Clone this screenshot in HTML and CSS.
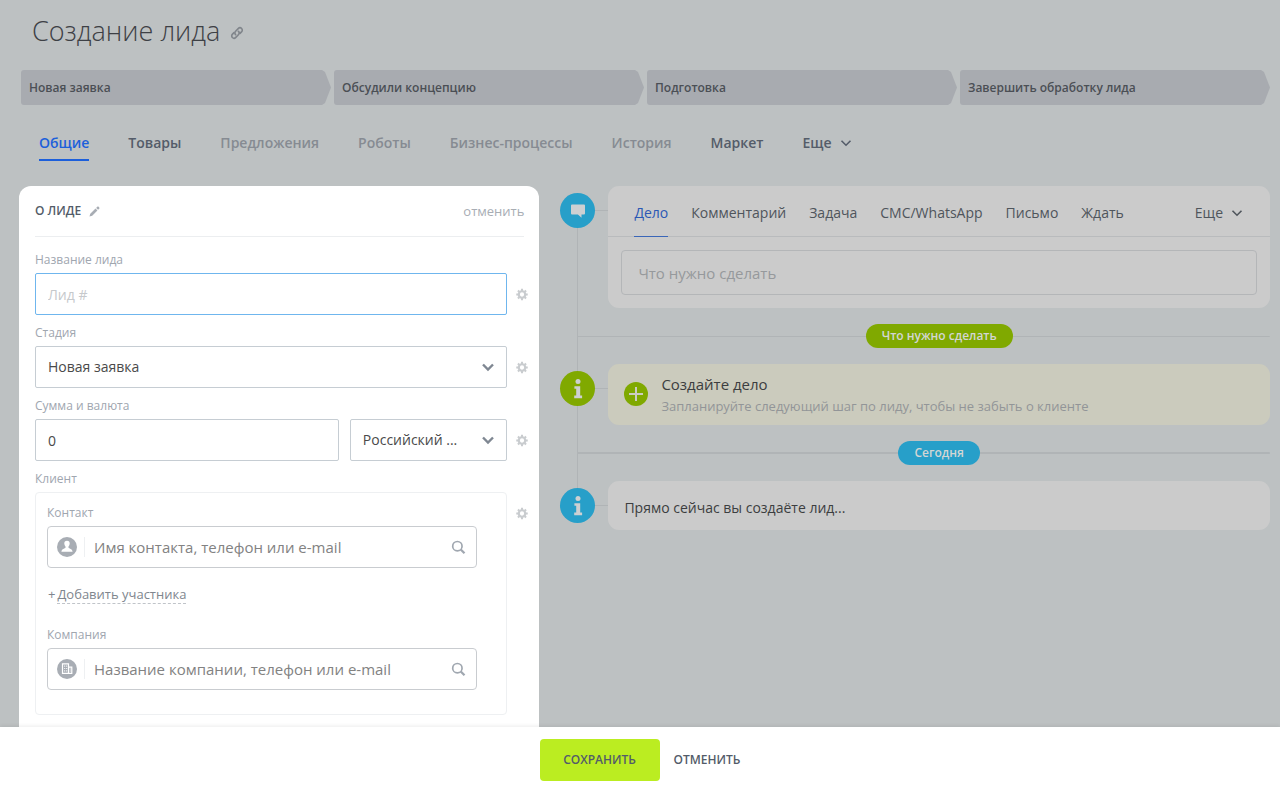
FILE: index.html
```html
<!DOCTYPE html>
<html lang="ru">
<head>
<meta charset="utf-8">
<meta name="viewport" content="width=device-width, initial-scale=1">
<title>Создание лида</title>
<link rel="stylesheet" href="styles.css">
</head>
<body>
<svg class="sprite" aria-hidden="true">
  <symbol id="gear" viewBox="0 0 14 14">
    <circle cx="7" cy="7" r="3.8" fill="none" stroke="currentColor" stroke-width="2.600"/>
    <path d="M7 .3v2.500M7 11.200v2.500M.3 7h2.500M11.200 7h2.500M2.300 2.300l1.700 1.700M10 10l1.700 1.700M11.700 2.300l-1.700 1.700M4 10l-1.700 1.700" stroke="currentColor" stroke-width="2.400"/>
  </symbol>
  <symbol id="chevron" viewBox="0 0 14 14">
    <path d="M2 4.5l5 5 5-5" fill="none" stroke="currentColor" stroke-width="2.4"/>
  </symbol>
  <symbol id="chevron-thin" viewBox="0 0 14 14">
    <path d="M2.500 4.700l4.500 4.500 4.500-4.500" fill="none" stroke="currentColor" stroke-width="1.600"/>
  </symbol>
  <symbol id="search" viewBox="0 0 16 16">
    <circle cx="6.8" cy="6.6" r="5" fill="none" stroke="currentColor" stroke-width="1.8"/>
    <path d="M10.4 10.2l4 4" stroke="currentColor" stroke-width="2.4"/>
  </symbol>
  <symbol id="info" viewBox="0 0 16 22">
    <circle cx="8" cy="3.6" r="2.5" fill="currentColor"/>
    <path d="M4.4 8.2h5.8v9.4h1.9v2.6H4.2v-2.6h2v-6.8H4.4z" fill="currentColor"/>
  </symbol>
</svg>

<main class="page">
  <header class="title-bar">
    <h1 class="title">Создание лида</h1>
    <button class="icon-button" type="button" aria-label="Скопировать ссылку">
      <svg class="link-icon" viewBox="0 0 14 14" fill="none" stroke="currentColor" stroke-width="1.600" stroke-linecap="round">
        <path d="M5.6 8.6c-1-1-.9-2.4 0-3.300l2.600-2.700c1-1 2.500-1 3.400-.1s.9 2.400-.1 3.400l-1.500 1.500"/>
        <path d="M8.400 5.400c1 1 .9 2.400 0 3.300l-2.600 2.700c-1 1-2.500 1-3.400.1s-.9-2.400.1-3.400l1.500-1.500"/>
      </svg>
    </button>
  </header>

  <ol class="stages">
    <li class="stage">Новая заявка</li>
    <li class="stage">Обсудили концепцию</li>
    <li class="stage">Подготовка</li>
    <li class="stage">Завершить обработку лида</li>
  </ol>

  <nav class="tabs">
    <a class="tab tab-active" href="#">Общие</a>
    <a class="tab" href="#">Товары</a>
    <a class="tab tab-disabled" href="#">Предложения</a>
    <a class="tab tab-disabled" href="#">Роботы</a>
    <a class="tab tab-disabled" href="#">Бизнес-процессы</a>
    <a class="tab tab-disabled" href="#">История</a>
    <a class="tab" href="#">Маркет</a>
    <button class="tab more" type="button">Еще <svg class="chevron"><use href="#chevron-thin"/></svg></button>
  </nav>

  <div class="columns">
    <section class="editor">
      <header class="editor-head">
        <h2 class="editor-title">О лиде</h2>
        <button class="icon-button" type="button" aria-label="Переименовать">
          <svg class="pencil" viewBox="0 0 12 12"><path d="M0.500 11.500l.9-3 5.700-5.700 2.100 2.100-5.700 5.700zM7.800 2.100l1.200-1.200c.5-.5 1.100-.5 1.500-.1l.7.7c.4.400.4 1-.1 1.500l-1.200 1.200z" fill="currentColor"/></svg>
        </button>
        <button class="editor-cancel" type="button">отменить</button>
      </header>

      <form class="fields">
        <label class="label" for="lead-name">Название лида</label>
        <div class="field">
          <input class="control control-focus" id="lead-name" type="text" placeholder="Лид #">
          <button class="icon-button gear" type="button" aria-label="Настройки поля"><svg><use href="#gear"/></svg></button>
        </div>

        <label class="label" for="lead-stage">Стадия</label>
        <div class="field">
          <div class="select">
            <select class="control" id="lead-stage"><option>Новая заявка</option></select>
            <svg class="select-arrow"><use href="#chevron"/></svg>
          </div>
          <button class="icon-button gear" type="button" aria-label="Настройки поля"><svg><use href="#gear"/></svg></button>
        </div>

        <label class="label" for="lead-sum">Сумма и валюта</label>
        <div class="field">
          <div class="money">
            <input class="control" id="lead-sum" type="text" value="0">
            <div class="select">
              <select class="control" aria-label="Валюта"><option>Российский ...</option></select>
              <svg class="select-arrow"><use href="#chevron"/></svg>
            </div>
          </div>
          <button class="icon-button gear" type="button" aria-label="Настройки поля"><svg><use href="#gear"/></svg></button>
        </div>

        <div class="label">Клиент</div>
        <div class="field">
          <div class="client">
            <label class="label" for="contact">Контакт</label>
            <div class="lookup">
              <svg class="lookup-icon" viewBox="0 0 20 20">
                <circle cx="10" cy="10" r="10" fill="#a8adb4"/>
                <path d="M10 3.800c-1.900 0-2.800 1.300-2.700 3 .1 1.200.5 2.100 1.200 2.700v1.300c-.3.700-3.900 1.100-4.100 3.900h11.200c-.2-2.800-3.800-3.200-4.100-3.900V9.500c.7-.6 1.100-1.500 1.200-2.700.1-1.700-.8-3-2.700-3z" fill="#fff"/>
              </svg>
              <input class="lookup-input" id="contact" type="text" placeholder="Имя контакта, телефон или e-mail">
              <button class="icon-button" type="button" aria-label="Найти контакт"><svg class="search"><use href="#search"/></svg></button>
            </div>
            <button class="add" type="button"><span class="add-sign">+</span><span class="add-text">Добавить участника</span></button>
            <label class="label" for="company">Компания</label>
            <div class="lookup">
              <svg class="lookup-icon" viewBox="0 0 20 20">
                <circle cx="10" cy="10" r="10" fill="#a8adb4"/>
                <path d="M5.500 4.800h6v9.500h-6zM11.500 8.200h3.300v6.100h-3.300" fill="none" stroke="#fff" stroke-width="1.200"/>
                <path d="M7.200 7.200h1M9.200 7.200h1M7.200 9.500h1M9.200 9.500h1M7.200 11.800h1M9.200 11.800h1M12.700 10h1M12.700 12h1" stroke="#fff" stroke-width="1.200"/>
              </svg>
              <input class="lookup-input" id="company" type="text" placeholder="Название компании, телефон или e-mail">
              <button class="icon-button" type="button" aria-label="Найти компанию"><svg class="search"><use href="#search"/></svg></button>
            </div>
          </div>
          <button class="icon-button gear" type="button" aria-label="Настройки поля"><svg><use href="#gear"/></svg></button>
        </div>
      </form>
    </section>

    <section class="timeline">
      <div class="entry">
        <span class="badge badge-blue">
          <svg class="bubble" viewBox="0 0 16 16"><path d="M2 1.500h12q1 0 1 1v8q0 1-1 1h-2.500v3.300l-3.600-3.300H2q-1 0-1-1v-8q0-1 1-1z" fill="currentColor"/></svg>
        </span>
        <div class="card">
          <nav class="actions">
            <a class="action action-active" href="#">Дело</a>
            <a class="action" href="#">Комментарий</a>
            <a class="action" href="#">Задача</a>
            <a class="action" href="#">СМС/WhatsApp</a>
            <a class="action" href="#">Письмо</a>
            <a class="action" href="#">Ждать</a>
            <button class="action action-more" type="button">Еще <svg class="chevron"><use href="#chevron-thin"/></svg></button>
          </nav>
          <div class="composer">
            <input class="todo" type="text" placeholder="Что нужно сделать" aria-label="Что нужно сделать">
          </div>
        </div>
      </div>

      <div class="divider"><span class="pill pill-green">Что нужно сделать</span></div>

      <div class="entry">
        <span class="badge badge-green"><svg class="info"><use href="#info"/></svg></span>
        <div class="card notice">
          <button class="icon-button plus" type="button" aria-label="Создать дело">
            <svg viewBox="0 0 24 24"><circle cx="12" cy="12" r="12" fill="#80a900"/><path d="M12 5v14M5 12h14" stroke="#cccdc2" stroke-width="2"/></svg>
          </button>
          <div>
            <div class="notice-title">Создайте дело</div>
            <div class="notice-text">Запланируйте следующий шаг по лиду, чтобы не забыть о клиенте</div>
          </div>
        </div>
      </div>

      <div class="divider divider-bold"><span class="pill pill-blue">Сегодня</span></div>

      <div class="entry">
        <span class="badge badge-blue"><svg class="info"><use href="#info"/></svg></span>
        <div class="card message">Прямо сейчас вы создаёте лид...</div>
      </div>
    </section>
  </div>
</main>

<footer class="footer">
  <button class="save" type="button">Сохранить</button>
  <button class="cancel" type="button">Отменить</button>
</footer>
</body>
</html>
```
FILE: styles.css
```css
* {
  box-sizing: border-box;
}

body {
  display: flex;
  flex-direction: column;
  height: 100vh;
  margin: 0;
  background: #bdc1c2;
  color: #4a4e54;
  font-family: "Open Sans", "Noto Sans", sans-serif;
  font-size: 15px;
  line-height: 20px;
}

button,
input,
select {
  margin: 0;
  padding: 0;
  border: 0;
  background: none;
  color: inherit;
  font: inherit;
}

a {
  color: inherit;
  text-decoration: none;
}

svg {
  display: block;
}

.sprite {
  position: absolute;
  width: 0;
  height: 0;
}

.icon-button {
  display: flex;
  flex: none;
}

.page {
  display: flex;
  flex: 1;
  flex-direction: column;
  min-height: 0;
  overflow: hidden;
}

/* Title */
.title-bar {
  display: flex;
  flex: none;
  align-items: center;
  gap: 10px;
  padding: 11px 32px 19px;
}

.title {
  margin: 0;
  color: #3d4045;
  font-size: 27px;
  font-weight: 300;
  line-height: 40px;
}

.title-bar .icon-button {
  padding-top: 4px;
  color: #80858b;
}

.link-icon {
  width: 14px;
  height: 14px;
}

/* Stages */
.stages {
  display: flex;
  flex: none;
  gap: 3px;
  margin: 0;
  padding: 0 10px 0 21px;
  list-style: none;
}

.stage {
  flex: 1;
  padding: 8px 8px 7px;
  border-radius: 3px 0 0 3px;
  background: #a8abb0;
  clip-path: polygon(0 0, calc(100% - 9px) 0, calc(100% - 6px) 2px, 100% 50%, calc(100% - 6px) calc(100% - 2px), calc(100% - 9px) 100%, 0 100%);
  color: #4b4f55;
  font-size: 12px;
  font-weight: 600;
}

/* Tabs */
.tabs {
  display: flex;
  flex: none;
  gap: 39px;
  padding: 28px 39px 25px;
}

.tab {
  padding-bottom: 6px;
  border-bottom: 2px solid transparent;
  color: #545c69;
  font-size: 14px;
  font-weight: 600;
}

.tab-active {
  border-color: #1c5fdb;
  color: #1c5fdb;
}

.tab-disabled {
  color: #868b92;
}

.more,
.action-more {
  display: flex;
  align-items: center;
  gap: 7px;
}

.chevron {
  width: 14px;
  height: 14px;
}

/* Columns */
.columns {
  display: grid;
  grid-template-columns: 11fr 15fr;
  flex: 1;
  gap: 21px;
  min-height: 0;
  padding: 0 10px 0 19px;
}

/* Editor */
.editor {
  padding: 0 11px 0 16px;
  border-radius: 12px 12px 0 0;
  background: #fff;
}

.editor-head {
  display: flex;
  align-items: center;
  gap: 8px;
  height: 51px;
  margin-right: 4px;
  border-bottom: 1px solid #eceef0;
}

.editor-title {
  margin: 0;
  color: #535c69;
  font-size: 12px;
  font-weight: 600;
  text-transform: uppercase;
}

.pencil {
  width: 11px;
  height: 11px;
  color: #a8adb4;
}

.editor-cancel {
  margin-left: auto;
  color: #a8adb4;
  font-size: 13px;
}

.fields {
  padding-top: 5px;
}

.label {
  display: block;
  padding: 8px 0 3px;
  color: #a0a6af;
  font-size: 12px;
}

.field {
  display: grid;
  grid-template-columns: 1fr 12px;
  align-items: start;
  gap: 9px;
}

.control {
  width: 100%;
  height: 42px;
  padding: 0 12px;
  border: 1px solid #c6cdd3;
  border-radius: 2px;
  background: #fff;
  color: #4a4a4a;
  font-size: 14px;
}

.control-focus {
  border-color: #6fb6ee;
}

.control::placeholder {
  color: #c6c9cc;
}

.select {
  display: grid;
}

.select .control,
.select-arrow {
  grid-area: 1 / 1;
}

.select .control {
  appearance: none;
}

.select-arrow {
  align-self: center;
  justify-self: end;
  width: 14px;
  height: 14px;
  margin-right: 12px;
  color: #7f8792;
  pointer-events: none;
}

.money {
  display: grid;
  grid-template-columns: 27fr 14fr;
  gap: 11px;
}

.gear {
  padding-top: 15px;
  color: #c9cccf;
}

.gear svg {
  width: 13px;
  height: 13px;
}

.client {
  padding: 2px 29px 24px 11px;
  border: 1px solid #eef0f2;
  border-radius: 4px;
}

.lookup {
  display: flex;
  align-items: center;
  height: 42px;
  padding: 0 10px 0 9px;
  border: 1px solid #c9ccd0;
  border-radius: 4px;
}

.lookup-icon {
  flex: none;
  width: 20px;
  height: 20px;
}

.lookup-input {
  flex: 1;
  min-width: 0;
  margin-left: 7px;
  padding-left: 9px;
  border-left: 1px solid #eef0f2;
  font-size: 15px;
}

.lookup-input::placeholder {
  color: #828282;
}

.search {
  width: 15px;
  height: 15px;
  color: #a0a7b0;
}

.add {
  display: flex;
  gap: 2px;
  margin: 17px 0 13px;
  padding-left: 1px;
  color: #80868e;
  font-size: 13px;
  line-height: 18px;
}

.add-text {
  border-bottom: 1px dashed #c0c4c9;
}

/* Timeline */
.timeline {
  display: flex;
  position: relative;
  flex-direction: column;
  align-self: start;
  gap: 16px;
}

.timeline::before {
  position: absolute;
  top: 24px;
  bottom: 24px;
  left: 17px;
  width: 1px;
  background: #b0b4b6;
  content: "";
}

.entry {
  display: grid;
  position: relative;
  grid-template-columns: 35px 1fr;
  align-items: start;
  gap: 13px;
  background: linear-gradient(#b0b4b6, #b0b4b6) 35px 24px / 13px 1px no-repeat;
}

.badge {
  display: grid;
  place-items: center;
  height: 35px;
  margin-top: 7px;
  border-radius: 50%;
  color: #cdd0d2;
}

.badge-blue,
.pill-blue {
  background: #279fc9;
}

.badge-green,
.pill-green {
  background: #80a900;
}

.bubble {
  width: 16px;
  height: 16px;
}

.info {
  width: 16px;
  height: 22px;
}

.card {
  border-radius: 11px;
  background: #cbcbcb;
}

.actions {
  display: flex;
  gap: 23px;
  padding: 0 26px;
  border-bottom: 1px solid #b9bbbd;
}

.action {
  margin-bottom: -1px;
  padding: 17px 0 13px;
  border-bottom: 1px solid transparent;
  color: #4f555c;
  font-size: 14px;
}

.action-active {
  border-color: #3a66b8;
  color: #2a58b5;
}

.action-more {
  margin-left: auto;
}

.composer {
  display: flex;
  padding: 13px;
}

.todo {
  flex: 1;
  height: 45px;
  padding: 0 16px;
  border: 1px solid #b4b6b8;
  border-radius: 4px;
}

.todo::placeholder {
  color: #96999c;
}

.divider {
  display: flex;
  justify-content: center;
  margin-left: 18px;
  padding-left: 30px;
  background: linear-gradient(#b0b4b6, #b0b4b6) center / 100% 1px no-repeat;
}

.divider-bold {
  background-size: 100% 2px;
}

.pill {
  padding: 2px 16px;
  border-radius: 12px;
  color: #d3d6d4;
  font-size: 12px;
  font-weight: 600;
}

.notice {
  display: flex;
  align-items: center;
  gap: 13px;
  padding: 8px 16px 9px;
  background: #cbcbbd;
}

.plus svg {
  width: 24px;
  height: 24px;
}

.notice-title {
  color: #3c3e40;
  line-height: 24px;
}

.notice-text {
  color: #929598;
  font-size: 13px;
}

.message {
  padding: 17px 16px 12px;
  color: #3c3e40;
  font-size: 14px;
}

/* Footer */
.footer {
  display: flex;
  z-index: 1;
  flex: none;
  align-items: center;
  justify-content: center;
  gap: 14px;
  height: 60px;
  padding-top: 5px;
  background: #fff;
  box-shadow: 0 -1px 4px rgba(0, 0, 0, 0.08);
  color: #535c69;
  font-size: 12px;
  font-weight: 600;
}

.footer button {
  text-transform: uppercase;
}

.save {
  min-width: 120px;
  height: 42px;
  border-radius: 4px;
  background: #bbed21;
}
```
